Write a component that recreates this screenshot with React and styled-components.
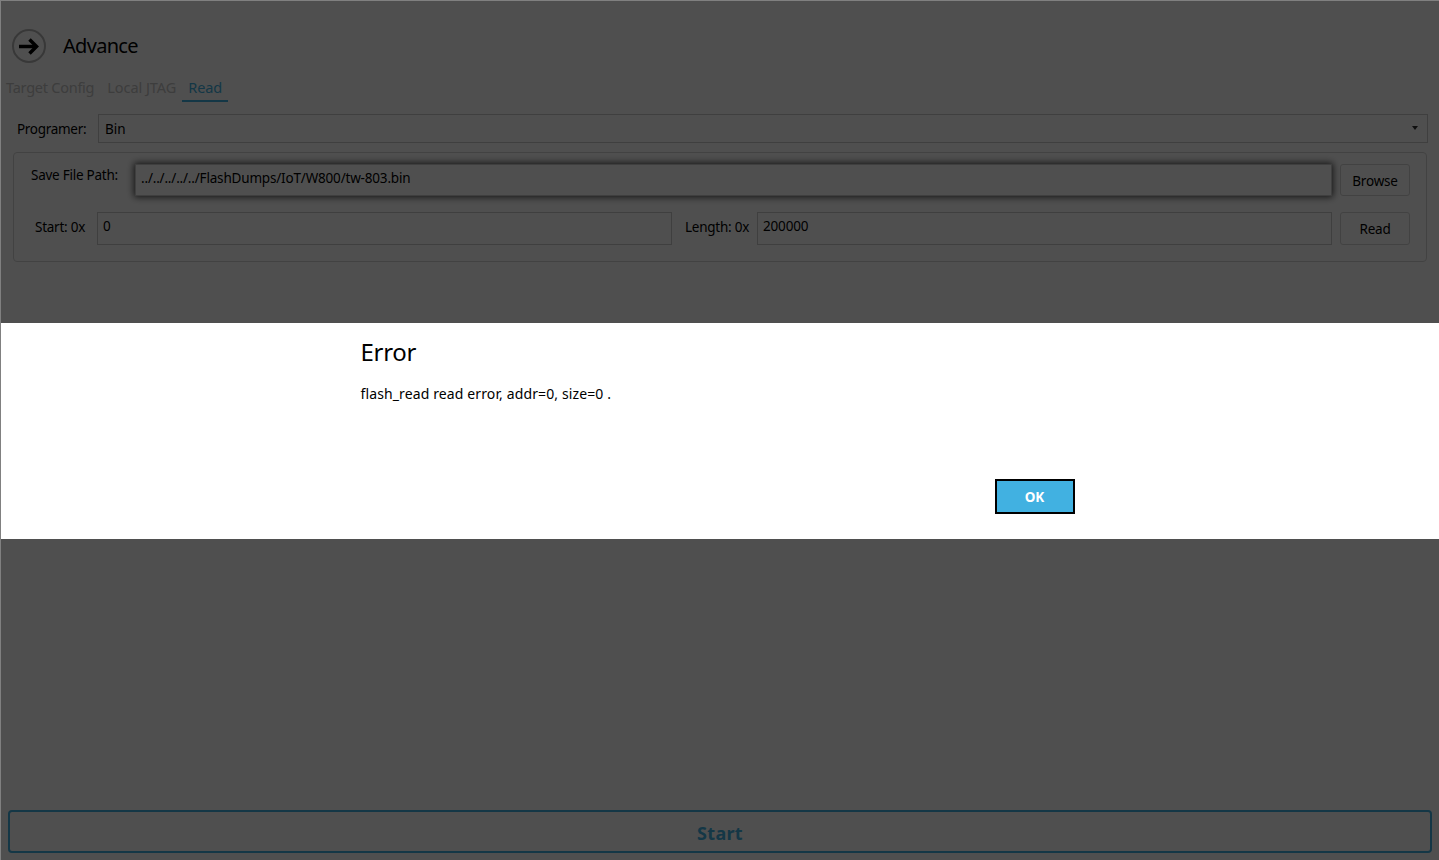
import styled, { createGlobalStyle } from 'styled-components';

const GlobalStyle = createGlobalStyle`
    html, body {
        margin: 0;
        padding: 0;
        background: #fff;
    }
    * {
        box-sizing: border-box;
    }
`

const Window = styled.div`
    position: relative;
    display: flex;
    flex-direction: column;
    width: 1439px;
    height: 860px;
    overflow: hidden;
    border-left: 1px solid #808080;
    border-top: 1px solid #808080;
    background: #fff;
    color: #000;
    font-family: "Noto Sans", "Open Sans", sans-serif;
    font-size: 13.5px;
`

const Header = styled.div`
    display: flex;
    align-items: center;
    gap: 17px;
    height: 34px;
    margin: 28px 0 0 11px;
`

const BackButton = styled.div`
    display: flex;
    align-items: center;
    justify-content: center;
    width: 34px;
    height: 34px;
    border: 2px solid #b5b5b5;
    border-radius: 50%;
`

const Title = styled.h1`
    margin: 0;
    font-size: 20px;
    font-weight: 400;
    line-height: 34px;
    letter-spacing: -0.7px;
`

const TabBar = styled.ul`
    display: flex;
    height: 24px;
    margin: 15px 0 0 5px;
    padding: 0;
    list-style: none;
`

const Tab = styled.li`
    margin-right: ${props => props.$active ? '0' : '13px'};
    margin-left: ${props => props.$active ? '-7px' : '0'};
    padding: ${props => props.$active ? '0 6px' : '0'};
    height: 24px;
    border-bottom: ${props => props.$active ? '2px solid #41b1e1' : 'none'};
    color: ${props => props.$active ? '#41b1e1' : '#c4c4c4'};
    font-size: 14.5px;
    line-height: 18px;
    letter-spacing: ${props => props.$spacing}px;
`

const ProgramerRow = styled.div`
    display: flex;
    align-items: center;
    height: 29px;
    margin: 12px 11px 0 16px;
`

const ProgramerLabel = styled.span`
    width: 81px;
    letter-spacing: -0.3px;
`

const Select = styled.div`
    display: flex;
    flex: 1;
    align-items: center;
    justify-content: space-between;
    height: 29px;
    padding: 0 9px 0 6px;
    border: 1px solid #cccccc;
`

const Caret = styled.span`
    width: 0;
    height: 0;
    margin-top: -2px;
    border-left: 3px solid transparent;
    border-right: 3px solid transparent;
    border-top: 4px solid #333;
`

const Group = styled.div`
    display: flex;
    flex-direction: column;
    gap: 16px;
    height: 110px;
    margin: 9px 12px 0 12px;
    padding: 11px 16px 0 0;
    border: 1px solid #d5d5d5;
    border-radius: 4px;
`

const FormRow = styled.div`
    display: flex;
    align-items: stretch;
    height: ${props => props.$height}px;
`

const Label = styled.span`
    flex: none;
    width: ${props => props.$width}px;
    padding-left: ${props => props.$indent}px;
    padding-top: ${props => props.$top}px;
    letter-spacing: -0.25px;
    white-space: nowrap;
`

const Field = styled.div`
    flex: 1;
    min-width: 0;
    padding: ${props => props.$top}px 0 0 5px;
    border: 1px solid #cccccc;
    background: #fff;
    box-shadow: ${props => props.$focused ? '0 0 7px 1px rgba(0, 0, 0, 0.75)' : 'none'};
    line-height: 20px;
    letter-spacing: -0.18px;
`

const SideButton = styled.button`
    flex: none;
    width: 70px;
    margin-left: 8px;
    padding: 1px 0 0;
    border: 1px solid #d5d5d5;
    border-radius: 3px;
    background: #fff;
    color: #000;
    font: inherit;
    letter-spacing: -0.2px;
`

const StartButton = styled.button`
    flex: none;
    width: 1424px;
    height: 43px;
    margin: auto 0 7px 7px;
    padding: 2px 0 0;
    border: 2px solid #41b1e1;
    border-radius: 4px;
    background: #fff;
    color: #41b1e1;
    font-family: inherit;
    font-size: 18px;
    font-weight: 700;
    letter-spacing: 0.3px;
`

const Overlay = styled.div`
    position: absolute;
    inset: 0;
    background: rgba(0, 0, 0, 0.69);
`

const Dialog = styled.div`
    position: absolute;
    top: 322px;
    left: 0;
    right: 0;
    display: grid;
    grid-template-columns: 25% 50% 25%;
    height: 216px;
    background: #fff;
`

const DialogBody = styled.div`
    grid-column: 2;
    display: flex;
    flex-direction: column;
    padding: 11px 5px 25px 0;
`

const DialogTitle = styled.h2`
    margin: 0;
    font-size: 24px;
    font-weight: 400;
    line-height: 36px;
    letter-spacing: -0.3px;
`

const DialogText = styled.p`
    margin: 14px 0 0;
    font-size: 14px;
    line-height: 20px;
    letter-spacing: 0.12px;
`

const OkButton = styled.button`
    align-self: flex-end;
    width: 80px;
    height: 35px;
    margin-top: auto;
    border: 2px solid #000;
    background: #41b1e1;
    color: #fff;
    font-family: inherit;
    font-size: 13.5px;
    font-weight: 700;
`

const App = () => {
    return (
        <Window>
            <GlobalStyle />
            <Header>
                <BackButton>
                    <svg width="20" height="17" viewBox="0 0 20 17" fill="none" stroke="#000" strokeWidth="3.5">
                        <path d="M0 8.5H17" />
                        <path d="M10.5 1.5L17.5 8.5L10.5 15.5" />
                    </svg>
                </BackButton>
                <Title>Advance</Title>
            </Header>
            <TabBar>
                <Tab $spacing={-0.25}>Target Config</Tab>
                <Tab $spacing={-0.05}>Local JTAG</Tab>
                <Tab $spacing={-0.1} $active>Read</Tab>
            </TabBar>
            <ProgramerRow>
                <ProgramerLabel>Programer:</ProgramerLabel>
                <Select>
                    Bin
                    <Caret />
                </Select>
            </ProgramerRow>
            <Group>
                <FormRow $height={32}>
                    <Label $width={121} $indent={17} $top={2}>Save File Path:</Label>
                    <Field $focused $top={3}>../../../../../FlashDumps/IoT/W800/tw-803.bin</Field>
                    <SideButton>Browse</SideButton>
                </FormRow>
                <FormRow $height={33}>
                    <Label $width={83} $indent={21} $top={6}>Start: 0x</Label>
                    <Field $top={3}>0</Field>
                    <Label $width={85} $indent={13} $top={6}>Length: 0x</Label>
                    <Field $top={3}>200000</Field>
                    <SideButton>Read</SideButton>
                </FormRow>
            </Group>
            <StartButton>Start</StartButton>
            <Overlay />
            <Dialog>
                <DialogBody>
                    <DialogTitle>Error</DialogTitle>
                    <DialogText>flash_read read error, addr=0, size=0 .</DialogText>
                    <OkButton>OK</OkButton>
                </DialogBody>
            </Dialog>
        </Window>
    );
}

export default App
